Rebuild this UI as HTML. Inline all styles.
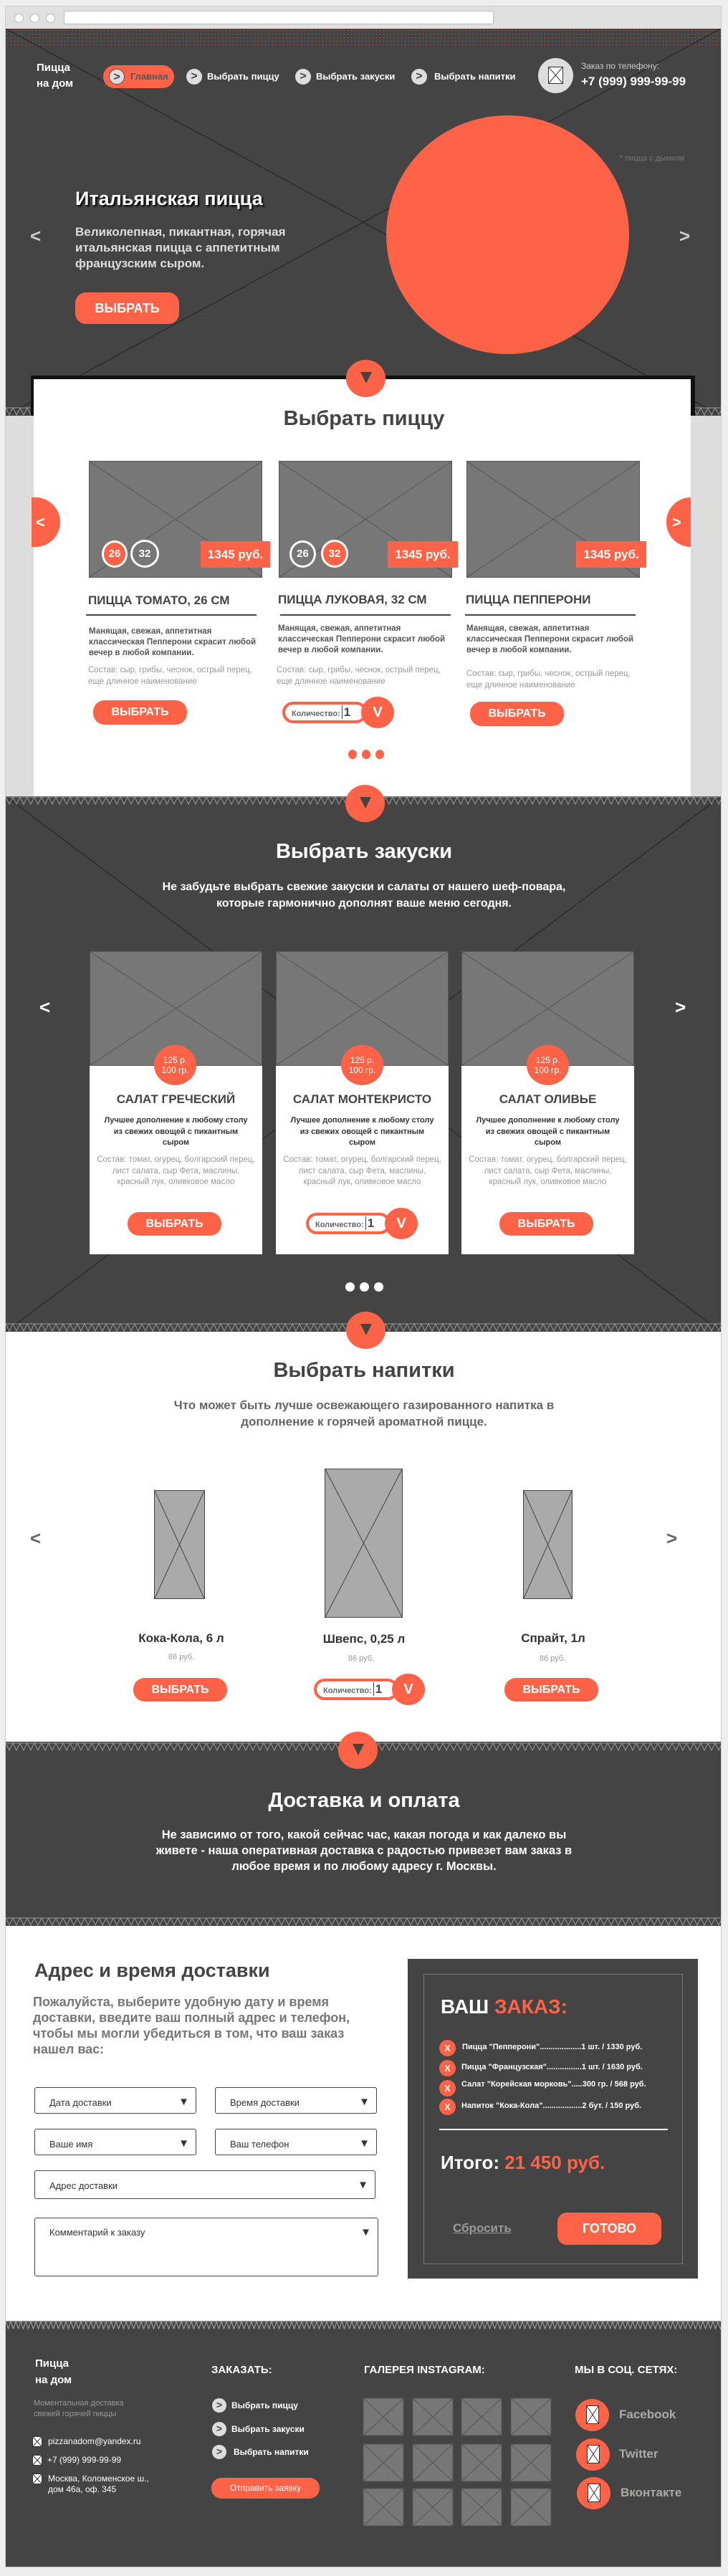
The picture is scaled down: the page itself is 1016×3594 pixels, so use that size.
<!DOCTYPE html>
<html><head><meta charset="utf-8">
<style>
*{margin:0;padding:0;box-sizing:border-box}
body{width:1016px;height:3594px;background:#eee;position:relative;font-family:"Liberation Sans",Arial,sans-serif;overflow:hidden}
.a{position:absolute}
.w{white-space:nowrap}
.or{background:#ff6347}
.ph{position:absolute;background:#777;border:1px solid #555}
.ph svg,.x svg{position:absolute;left:0;top:0;width:100%;height:100%}
.btn{position:absolute;background:#ff6347;color:#fff;font-weight:bold;border-radius:16px;text-align:center}
.zz{position:absolute;left:8px;width:998px;height:12px}
.arr{position:absolute;width:55px;height:52px;border-radius:50%;background:#ff6347}
.arr:after{content:"";position:absolute;left:20px;top:17px;border-left:8px solid transparent;border-right:8px solid transparent;border-top:16px solid #444}
.nic{position:absolute;width:22px;height:22px;border-radius:50%;background:#ddd;color:#444;font-weight:bold;font-size:16px;line-height:21px;text-align:center}
.qty{position:absolute;height:30px;width:118px;border:4px solid #ff6347;border-radius:15px;background:#fff;font-size:11px;font-weight:bold;color:#666;padding-left:9px;line-height:22px}
.qty b{font-size:17px;color:#444;border-left:1px solid #444;padding-left:2px;margin-left:2px}
.qv{position:absolute;width:46px;height:44px;border-radius:50%;background:#ff6347;color:#fff;font-weight:bold;font-size:20px;text-align:center;line-height:44px}
.inp{position:absolute;border:1px solid #444;border-radius:3px;background:#fff;font-size:13px;color:#333;padding:13px 0 0 20px}
.inp:after{content:"▼";position:absolute;right:9px;top:11px;font-size:15px;color:#333}
</style></head><body>
<svg width="0" height="0" style="position:absolute"><defs>
<pattern id="zg" width="20" height="12" patternUnits="userSpaceOnUse"><path d="M0 1 L20 1 M0 1 L5 11 L10 1 L15 11 L20 1" stroke="#999" stroke-width="1" fill="none"/></pattern>
<pattern id="zg2" width="14" height="12" patternUnits="userSpaceOnUse"><path d="M0 1 L14 1 M0 1 L3.5 11 L7 1 L10.5 11 L14 1" stroke="#aaa" stroke-width="1" fill="none"/></pattern>
<pattern id="dots" width="5" height="5" patternUnits="userSpaceOnUse"><rect x="2" y="2" width="1" height="1" fill="#d55"/></pattern>
</defs></svg>

<!-- browser chrome -->
<div class="a" style="left:7px;top:8px;width:1000px;height:3574px;background:#fff;border:1px solid #ccc"></div>
<div class="a" style="left:8px;top:9px;width:998px;height:31px;background:#e0e0e0"></div>
<div class="a" style="left:20px;top:19px;width:13px;height:13px;border-radius:50%;background:#fff;border:1px solid #bbb"></div>
<div class="a" style="left:42px;top:19px;width:13px;height:13px;border-radius:50%;background:#fff;border:1px solid #bbb"></div>
<div class="a" style="left:64px;top:19px;width:13px;height:13px;border-radius:50%;background:#fff;border:1px solid #bbb"></div>
<div class="a" style="left:89px;top:15px;width:600px;height:19px;background:#fff;border:1px solid #bbb;border-radius:3px"></div>

<!-- HERO -->
<div class="a" style="left:8px;top:40px;width:998px;height:540px;background:#444"></div>
<svg class="a" style="left:8px;top:40px" width="998" height="25"><rect width="998" height="25" fill="url(#dots)"/><line x1="0" y1="0" x2="998" y2="0" stroke="#d55" stroke-dasharray="1 2"/></svg>
<svg class="a" style="left:8px;top:40px" width="998" height="540"><line x1="0" y1="0" x2="998" y2="540" stroke="#222"/><line x1="998" y1="0" x2="0" y2="540" stroke="#222"/></svg>
<div class="a w" style="left:51px;top:84px;color:#fff;font-weight:bold;font-size:15px;line-height:22px">Пицца<br>на дом</div>
<div class="a" style="left:144px;top:91px;width:99px;height:32px;border-radius:16px;background:#ff6347"></div>
<div class="nic" style="left:152px;top:96px;border:1px solid #555">&gt;</div>
<div class="a w" style="left:182px;top:99px;font-size:13px;font-weight:bold;color:#555">Главная</div>
<div class="nic" style="left:260px;top:96px">&gt;</div>
<div class="a w" style="left:289px;top:99px;font-size:13px;font-weight:bold;color:#fff">Выбрать пиццу</div>
<div class="nic" style="left:412px;top:96px">&gt;</div>
<div class="a w" style="left:441px;top:99px;font-size:13px;font-weight:bold;color:#fff">Выбрать закуски</div>
<div class="nic" style="left:574px;top:96px">&gt;</div>
<div class="a w" style="left:606px;top:99px;font-size:13px;font-weight:bold;color:#fff">Выбрать напитки</div>
<div class="a" style="left:751px;top:81px;width:49px;height:49px;border-radius:50%;background:#ddd"></div>
<div class="a x" style="left:765px;top:93px;width:21px;height:24px;background:#fff;border:1px solid #333"><svg><line x1="0" y1="0" x2="100%" y2="100%" stroke="#333"/><line x1="100%" y1="0" x2="0" y2="100%" stroke="#333"/></svg></div>
<div class="a w" style="left:811px;top:85px;font-size:12px;color:#ccc">Заказ по телефону:</div>
<div class="a w" style="left:811px;top:104px;font-size:17px;font-weight:bold;color:#fff">+7 (999) 999-99-99</div>
<div class="a" style="left:539px;top:161px;width:339px;height:333px;border-radius:50%;background:#ff6347"></div>
<div class="a w" style="left:865px;top:215px;font-size:11px;color:#777">* пицца с дымком</div>
<div class="a w" style="left:105px;top:262px;font-size:27px;font-weight:bold;color:#fff;text-shadow:2px 2px 2px #000">Итальянская пицца</div>
<div class="a" style="left:105px;top:313px;width:340px;font-size:17px;font-weight:bold;color:#ddd;line-height:22px">Великолепная, пикантная, горячая итальянская пицца с аппетитным французским сыром.</div>
<div class="btn" style="left:105px;top:408px;width:145px;height:44px;border-radius:15px;font-size:18px;line-height:44px">ВЫБРАТЬ</div>
<div class="a" style="left:42px;top:314px;font-size:26px;font-weight:bold;color:#ccc">&lt;</div>
<div class="a" style="left:948px;top:314px;font-size:26px;font-weight:bold;color:#ccc">&gt;</div>
<svg class="zz" style="top:568px"><rect width="998" height="12" fill="url(#zg)"/></svg>

<!-- PIZZA -->
<div class="a" style="left:8px;top:580px;width:998px;height:531px;background:#ddd"></div>
<div class="a" style="left:43px;top:524px;width:927px;height:56px;background:#111"></div>
<div class="a" style="left:47px;top:529px;width:917px;height:582px;background:#fff"></div>
<div class="arr" style="left:483px;top:502px"></div>
<div class="a w" style="left:0;width:1016px;text-align:center;top:568px;font-size:29px;font-weight:bold;color:#444">Выбрать пиццу</div>
<div class="a" style="left:44px;top:694px;width:40px;height:69px;border-radius:0 35px 35px 0;background:#ff6347;color:#fff;font-weight:bold;font-size:22px;line-height:69px;padding-left:6px">&lt;</div>
<div class="a" style="left:930px;top:694px;width:34px;height:69px;border-radius:35px 0 0 35px;background:#ff6347;color:#fff;font-weight:bold;font-size:22px;line-height:69px;padding-left:8px">&gt;</div>

<div class="ph" style="left:124px;top:643px;width:242px;height:163px"><svg><line x1="0" y1="0" x2="100%" y2="100%" stroke="#555"/><line x1="100%" y1="0" x2="0" y2="100%" stroke="#555"/></svg></div>
<div class="ph" style="left:389px;top:643px;width:242px;height:163px"><svg><line x1="0" y1="0" x2="100%" y2="100%" stroke="#555"/><line x1="100%" y1="0" x2="0" y2="100%" stroke="#555"/></svg></div>
<div class="ph" style="left:651px;top:643px;width:242px;height:163px"><svg><line x1="0" y1="0" x2="100%" y2="100%" stroke="#555"/><line x1="100%" y1="0" x2="0" y2="100%" stroke="#555"/></svg></div>
<div class="a or" style="left:142px;top:754px;width:36px;height:38px;border-radius:50%;border:3px solid #fff;color:#fff;font-size:15px;font-weight:bold;text-align:center;line-height:32px">26</div>
<div class="a" style="left:182px;top:753px;width:40px;height:39px;border-radius:50%;border:3px solid #fff;background:#777;color:#fff;font-size:15px;font-weight:bold;text-align:center;line-height:33px">32</div>
<div class="a" style="left:404px;top:754px;width:37px;height:38px;border-radius:50%;border:3px solid #fff;background:#777;color:#fff;font-size:15px;font-weight:bold;text-align:center;line-height:32px">26</div>
<div class="a or" style="left:448px;top:753px;width:38px;height:39px;border-radius:50%;border:3px solid #fff;color:#fff;font-size:15px;font-weight:bold;text-align:center;line-height:33px">32</div>
<div class="a or w" style="left:280px;top:755px;width:97px;height:37px;color:#fff;font-size:17px;font-weight:bold;text-align:center;line-height:37px">1345 руб.</div>
<div class="a or w" style="left:541px;top:755px;width:98px;height:37px;color:#fff;font-size:17px;font-weight:bold;text-align:center;line-height:37px">1345 руб.</div>
<div class="a or w" style="left:804px;top:755px;width:98px;height:37px;color:#fff;font-size:17px;font-weight:bold;text-align:center;line-height:37px">1345 руб.</div>

<div class="a w" style="left:123px;top:828px;font-size:17px;font-weight:bold;color:#444">ПИЦЦА ТОМАТО, 26 СМ</div>
<div class="a w" style="left:388px;top:827px;font-size:17px;font-weight:bold;color:#444">ПИЦЦА ЛУКОВАЯ, 32 СМ</div>
<div class="a w" style="left:650px;top:827px;font-size:17px;font-weight:bold;color:#444">ПИЦЦА ПЕППЕРОНИ</div>
<div class="a" style="left:120px;top:857px;width:238px;height:2px;background:#444"></div>
<div class="a" style="left:391px;top:857px;width:238px;height:2px;background:#444"></div>
<div class="a" style="left:649px;top:857px;width:238px;height:2px;background:#444"></div>
<div class="a" style="left:124px;top:874px;width:240px;font-size:11.5px;font-weight:bold;color:#555;line-height:15px">Манящая, свежая, аппетитная классическая Пепперони скрасит любой вечер в любой компании.</div>
<div class="a" style="left:388px;top:870px;width:240px;font-size:11.5px;font-weight:bold;color:#555;line-height:15px">Манящая, свежая, аппетитная классическая Пепперони скрасит любой вечер в любой компании.</div>
<div class="a" style="left:651px;top:870px;width:240px;font-size:11.5px;font-weight:bold;color:#555;line-height:15px">Манящая, свежая, аппетитная классическая Пепперони скрасит любой вечер в любой компании.</div>
<div class="a" style="left:123px;top:927px;width:240px;font-size:11.5px;color:#999;line-height:16px">Состав: сыр, грибы, чеснок, острый перец, еще длинное наименование</div>
<div class="a" style="left:386px;top:927px;width:240px;font-size:11.5px;color:#999;line-height:16px">Состав: сыр, грибы, чеснок, острый перец, еще длинное наименование</div>
<div class="a" style="left:651px;top:932px;width:240px;font-size:11.5px;color:#999;line-height:16px">Состав: сыр, грибы, чеснок, острый перец, еще длинное наименование</div>
<div class="btn" style="left:130px;top:977px;width:131px;height:34px;font-size:16px;line-height:34px">ВЫБРАТЬ</div>
<div class="qty" style="left:394px;top:979px">Количество:<b>1</b></div>
<div class="qv" style="left:504px;top:972px">V</div>
<div class="btn" style="left:656px;top:979px;width:131px;height:34px;font-size:16px;line-height:34px">ВЫБРАТЬ</div>
<div class="a or" style="left:486px;top:1046px;width:12px;height:13px;border-radius:50%"></div>
<div class="a or" style="left:505px;top:1046px;width:12px;height:13px;border-radius:50%"></div>
<div class="a or" style="left:524px;top:1046px;width:12px;height:13px;border-radius:50%"></div>

<!-- SNACKS -->
<div class="a" style="left:8px;top:1111px;width:998px;height:747px;background:#444"></div>
<svg class="a" style="left:8px;top:1111px" width="998" height="747"><line x1="0" y1="0" x2="998" y2="747" stroke="#222"/><line x1="998" y1="0" x2="0" y2="747" stroke="#222"/></svg>
<svg class="zz" style="top:1111px"><rect width="998" height="12" fill="url(#zg)"/></svg>
<div class="arr" style="left:482px;top:1095px"></div>
<div class="a w" style="left:0;width:1016px;text-align:center;top:1172px;font-size:29px;font-weight:bold;color:#fff">Выбрать закуски</div>
<div class="a" style="left:0;width:1016px;text-align:center;top:1226px;font-size:16px;font-weight:bold;color:#fff;line-height:23px">Не забудьте выбрать свежие закуски и салаты от нашего шеф-повара,<br>которые гармонично дополнят ваше меню сегодня.</div>
<div class="a" style="left:55px;top:1390px;font-size:26px;font-weight:bold;color:#fff">&lt;</div>
<div class="a" style="left:942px;top:1390px;font-size:26px;font-weight:bold;color:#fff">&gt;</div>

<div class="a" style="left:125px;top:1327px;width:241px;height:423px;background:#fff"></div>
<div class="a" style="left:385px;top:1327px;width:241px;height:423px;background:#fff"></div>
<div class="a" style="left:644px;top:1327px;width:241px;height:423px;background:#fff"></div>
<div class="ph" style="left:125px;top:1327px;width:241px;height:160px"><svg><line x1="0" y1="0" x2="100%" y2="100%" stroke="#555"/><line x1="100%" y1="0" x2="0" y2="100%" stroke="#555"/></svg></div>
<div class="ph" style="left:385px;top:1327px;width:241px;height:160px"><svg><line x1="0" y1="0" x2="100%" y2="100%" stroke="#555"/><line x1="100%" y1="0" x2="0" y2="100%" stroke="#555"/></svg></div>
<div class="ph" style="left:644px;top:1327px;width:241px;height:160px"><svg><line x1="0" y1="0" x2="100%" y2="100%" stroke="#555"/><line x1="100%" y1="0" x2="0" y2="100%" stroke="#555"/></svg></div>
<div class="a or" style="left:215px;top:1458px;width:59px;height:56px;border-radius:50%;color:#fff;font-size:12px;text-align:center;line-height:14px;padding-top:14px">125 р.<br>100 гр.</div>
<div class="a or" style="left:476px;top:1458px;width:59px;height:56px;border-radius:50%;color:#fff;font-size:12px;text-align:center;line-height:14px;padding-top:14px">125 р.<br>100 гр.</div>
<div class="a or" style="left:735px;top:1458px;width:59px;height:56px;border-radius:50%;color:#fff;font-size:12px;text-align:center;line-height:14px;padding-top:14px">125 р.<br>100 гр.</div>
<div class="a w" style="left:125px;width:241px;text-align:center;top:1524px;font-size:17px;font-weight:bold;color:#444">САЛАТ ГРЕЧЕСКИЙ</div>
<div class="a w" style="left:385px;width:241px;text-align:center;top:1524px;font-size:17px;font-weight:bold;color:#444">САЛАТ МОНТЕКРИСТО</div>
<div class="a w" style="left:644px;width:241px;text-align:center;top:1524px;font-size:17px;font-weight:bold;color:#444">САЛАТ ОЛИВЬЕ</div>
<div class="a" style="left:140px;width:211px;text-align:center;top:1556px;font-size:11px;font-weight:bold;color:#333;line-height:15.5px">Лучшее дополнение к любому столу из свежих овощей с пикантным сыром</div>
<div class="a" style="left:400px;width:211px;text-align:center;top:1556px;font-size:11px;font-weight:bold;color:#333;line-height:15.5px">Лучшее дополнение к любому столу из свежих овощей с пикантным сыром</div>
<div class="a" style="left:659px;width:211px;text-align:center;top:1556px;font-size:11px;font-weight:bold;color:#333;line-height:15.5px">Лучшее дополнение к любому столу из свежих овощей с пикантным сыром</div>
<div class="a" style="left:135px;width:221px;text-align:center;top:1611px;font-size:11.5px;color:#999;line-height:15.5px">Состав: томат, огурец, болгарский перец, лист салата, сыр Фета, маслины, красный лук, оливковое масло</div>
<div class="a" style="left:395px;width:221px;text-align:center;top:1611px;font-size:11.5px;color:#999;line-height:15.5px">Состав: томат, огурец, болгарский перец, лист салата, сыр Фета, маслины, красный лук, оливковое масло</div>
<div class="a" style="left:654px;width:221px;text-align:center;top:1611px;font-size:11.5px;color:#999;line-height:15.5px">Состав: томат, огурец, болгарский перец, лист салата, сыр Фета, маслины, красный лук, оливковое масло</div>
<div class="btn" style="left:178px;top:1691px;width:131px;height:33px;font-size:16px;line-height:33px">ВЫБРАТЬ</div>
<div class="qty" style="left:427px;top:1692px">Количество:<b>1</b></div>
<div class="qv" style="left:537px;top:1685px">V</div>
<div class="btn" style="left:697px;top:1691px;width:131px;height:33px;font-size:16px;line-height:33px">ВЫБРАТЬ</div>
<div class="a" style="left:482px;top:1789px;width:13px;height:13px;border-radius:50%;background:#fff"></div>
<div class="a" style="left:502px;top:1789px;width:13px;height:13px;border-radius:50%;background:#fff"></div>
<div class="a" style="left:522px;top:1789px;width:13px;height:13px;border-radius:50%;background:#fff"></div>
<svg class="zz" style="top:1846px"><rect width="998" height="12" fill="url(#zg)"/></svg>

<!-- DRINKS -->
<div class="a" style="left:8px;top:1858px;width:998px;height:572px;background:#fff"></div>
<div class="arr" style="left:483px;top:1830px"></div>
<div class="a w" style="left:0;width:1016px;text-align:center;top:1896px;font-size:29px;font-weight:bold;color:#444">Выбрать напитки</div>
<div class="a" style="left:0;width:1016px;text-align:center;top:1949px;font-size:17px;font-weight:bold;color:#666;line-height:23px">Что может быть лучше освежающего газированного напитка в<br>дополнение к горячей ароматной пицце.</div>
<div class="a" style="left:42px;top:2131px;font-size:26px;font-weight:bold;color:#666">&lt;</div>
<div class="a" style="left:930px;top:2131px;font-size:26px;font-weight:bold;color:#666">&gt;</div>
<div class="ph" style="left:215px;top:2079px;width:71px;height:152px;background:#aaa;border-color:#444"><svg><line x1="0" y1="0" x2="100%" y2="100%" stroke="#444"/><line x1="100%" y1="0" x2="0" y2="100%" stroke="#444"/></svg></div>
<div class="ph" style="left:453px;top:2049px;width:109px;height:208px;background:#aaa;border-color:#444"><svg><line x1="0" y1="0" x2="100%" y2="100%" stroke="#444"/><line x1="100%" y1="0" x2="0" y2="100%" stroke="#444"/></svg></div>
<div class="ph" style="left:730px;top:2079px;width:69px;height:152px;background:#aaa;border-color:#444"><svg><line x1="0" y1="0" x2="100%" y2="100%" stroke="#444"/><line x1="100%" y1="0" x2="0" y2="100%" stroke="#444"/></svg></div>
<div class="a w" style="left:153px;width:200px;text-align:center;top:2276px;font-size:17px;font-weight:bold;color:#333">Кока-Кола, 6 л</div>
<div class="a w" style="left:408px;width:200px;text-align:center;top:2277px;font-size:17px;font-weight:bold;color:#333">Швепс, 0,25 л</div>
<div class="a w" style="left:672px;width:200px;text-align:center;top:2276px;font-size:17px;font-weight:bold;color:#333">Спрайт, 1л</div>
<div class="a w" style="left:153px;width:200px;text-align:center;top:2306px;font-size:11px;color:#999">86 руб.</div>
<div class="a w" style="left:404px;width:200px;text-align:center;top:2308px;font-size:11px;color:#999">86 руб.</div>
<div class="a w" style="left:671px;width:200px;text-align:center;top:2308px;font-size:11px;color:#999">86 руб.</div>
<div class="btn" style="left:186px;top:2341px;width:131px;height:33px;font-size:16px;line-height:33px">ВЫБРАТЬ</div>
<div class="qty" style="left:438px;top:2342px">Количество:<b>1</b></div>
<div class="qv" style="left:547px;top:2335px">V</div>
<div class="btn" style="left:704px;top:2341px;width:131px;height:33px;font-size:16px;line-height:33px">ВЫБРАТЬ</div>

<!-- DELIVERY -->
<div class="a" style="left:8px;top:2430px;width:998px;height:257px;background:#444"></div>
<svg class="zz" style="top:2431px"><rect width="998" height="12" fill="url(#zg)"/></svg>
<div class="arr" style="left:472px;top:2416px"></div>
<div class="a w" style="left:0;width:1016px;text-align:center;top:2496px;font-size:29px;font-weight:bold;color:#fff">Доставка и оплата</div>
<div class="a" style="left:0;width:1016px;text-align:center;top:2549px;font-size:16.5px;font-weight:bold;color:#fff;line-height:22px">Не зависимо от того, какой сейчас час, какая погода и как далеко вы<br>живете - наша оперативная доставка с радостью привезет вам заказ в<br>любое время и по любому адресу г. Москвы.</div>
<svg class="zz" style="top:2675px"><rect width="998" height="12" fill="url(#zg)"/></svg>

<!-- ADDRESS -->
<div class="a w" style="left:48px;top:2734px;font-size:27px;font-weight:bold;color:#444">Адрес и время доставки</div>
<div class="a" style="left:46px;top:2782px;width:460px;font-size:18px;font-weight:bold;color:#777;line-height:22px">Пожалуйста, выберите удобную дату и время доставки, введите ваш полный адрес и телефон, чтобы мы могли убедиться в том, что ваш заказ нашел вас:</div>
<div class="inp" style="left:48px;top:2912px;width:226px;height:37px">Дата доставки</div>
<div class="inp" style="left:300px;top:2912px;width:226px;height:37px">Время доставки</div>
<div class="inp" style="left:48px;top:2970px;width:226px;height:37px">Ваше имя</div>
<div class="inp" style="left:300px;top:2970px;width:226px;height:37px">Ваш телефон</div>
<div class="inp" style="left:48px;top:3028px;width:476px;height:40px">Адрес доставки</div>
<div class="inp" style="left:48px;top:3094px;width:480px;height:82px;padding-top:12px">Комментарий к заказу</div>

<div class="a" style="left:569px;top:2733px;width:405px;height:446px;background:#444"></div>
<div class="a" style="left:591px;top:2754px;width:362px;height:405px;border:1px solid #777"></div>
<div class="a w" style="left:615px;top:2784px;font-size:28px;font-weight:bold;color:#fff">ВАШ <span style="color:#ff6347">ЗАКАЗ:</span></div>
<div class="a or" style="left:613px;top:2846px;width:23px;height:23px;border-radius:50%;color:#fff;font-weight:bold;font-size:13px;text-align:center;line-height:23px">X</div>
<div class="a or" style="left:613px;top:2874px;width:23px;height:23px;border-radius:50%;color:#fff;font-weight:bold;font-size:13px;text-align:center;line-height:23px">X</div>
<div class="a or" style="left:613px;top:2902px;width:23px;height:23px;border-radius:50%;color:#fff;font-weight:bold;font-size:13px;text-align:center;line-height:23px">X</div>
<div class="a or" style="left:613px;top:2928px;width:23px;height:23px;border-radius:50%;color:#fff;font-weight:bold;font-size:13px;text-align:center;line-height:23px">X</div>
<div class="a w" style="left:645px;top:2850px;font-size:11px;font-weight:bold;color:#fff">Пицца "Пепперони"...................1 шт. / 1330 руб.</div>
<div class="a w" style="left:644px;top:2878px;font-size:11px;font-weight:bold;color:#fff">Пицца "Французская"................1 шт. / 1630 руб.</div>
<div class="a w" style="left:644px;top:2902px;font-size:11px;font-weight:bold;color:#fff">Салат "Корейская морковь".....300 гр. / 568 руб.</div>
<div class="a w" style="left:644px;top:2932px;font-size:11px;font-weight:bold;color:#fff">Напиток "Кока-Кола"..................2 бут. / 150 руб.</div>
<div class="a" style="left:613px;top:2970px;width:319px;height:2px;background:#fff"></div>
<div class="a w" style="left:615px;top:3002px;font-size:26px;font-weight:bold;color:#fff">Итого: <span style="color:#ff6347">21 450 руб.</span></div>
<div class="a w" style="left:632px;top:3099px;font-size:17px;font-weight:bold;color:#999;text-decoration:underline">Сбросить</div>
<div class="btn" style="left:778px;top:3087px;width:145px;height:45px;border-radius:13px;font-size:18px;line-height:45px">ГОТОВО</div>

<!-- FOOTER -->
<div class="a" style="left:8px;top:3238px;width:998px;height:343px;background:#444"></div>
<svg class="zz" style="top:3238px"><rect width="998" height="12" fill="url(#zg2)"/></svg>
<div class="a w" style="left:49px;top:3286px;font-size:15px;font-weight:bold;color:#fff;line-height:23px">Пицца<br>на дом</div>
<div class="a w" style="left:47px;top:3346px;font-size:11px;color:#999;line-height:15px">Моментальная доставка<br>свежей горячей пиццы</div>
<div class="a x" style="left:45px;top:3399px;width:14px;height:15px;background:#fff;border:1px solid #333"><svg><line x1="0" y1="0" x2="100%" y2="100%" stroke="#333"/><line x1="100%" y1="0" x2="0" y2="100%" stroke="#333"/></svg></div>
<div class="a x" style="left:45px;top:3425px;width:14px;height:15px;background:#fff;border:1px solid #333"><svg><line x1="0" y1="0" x2="100%" y2="100%" stroke="#333"/><line x1="100%" y1="0" x2="0" y2="100%" stroke="#333"/></svg></div>
<div class="a x" style="left:45px;top:3451px;width:14px;height:15px;background:#fff;border:1px solid #333"><svg><line x1="0" y1="0" x2="100%" y2="100%" stroke="#333"/><line x1="100%" y1="0" x2="0" y2="100%" stroke="#333"/></svg></div>
<div class="a w" style="left:67px;top:3399px;font-size:12px;color:#fff">pizzanadom@yandex.ru</div>
<div class="a w" style="left:66px;top:3425px;font-size:12px;color:#fff">+7 (999) 999-99-99</div>
<div class="a w" style="left:67px;top:3451px;font-size:12px;color:#fff;line-height:15px">Москва, Коломенское ш.,<br>дом 46а, оф. 345</div>

<div class="a w" style="left:295px;top:3298px;font-size:15px;font-weight:bold;color:#fff">ЗАКАЗАТЬ:</div>
<div class="nic" style="left:296px;top:3346px;width:20px;height:20px;font-size:14px;line-height:19px">&gt;</div>
<div class="a w" style="left:323px;top:3349px;font-size:12px;font-weight:bold;color:#fff">Выбрать пиццу</div>
<div class="nic" style="left:296px;top:3379px;width:20px;height:20px;font-size:14px;line-height:19px">&gt;</div>
<div class="a w" style="left:323px;top:3382px;font-size:12px;font-weight:bold;color:#fff">Выбрать закуски</div>
<div class="nic" style="left:296px;top:3411px;width:20px;height:20px;font-size:14px;line-height:19px">&gt;</div>
<div class="a w" style="left:326px;top:3414px;font-size:12px;font-weight:bold;color:#fff">Выбрать напитки</div>
<div class="btn" style="left:295px;top:3457px;width:151px;height:29px;border-radius:14px;font-size:12px;font-weight:normal;line-height:29px">Отправить заявку</div>

<div class="a w" style="left:508px;top:3298px;font-size:15px;font-weight:bold;color:#fff">ГАЛЕРЕЯ INSTAGRAM:</div>
<svg class="a" style="left:506px;top:3345px" width="266" height="182">
<g stroke="#555" fill="#777">
<rect x="1" y="1" width="56" height="52"/><rect x="70" y="1" width="56" height="52"/><rect x="138" y="1" width="56" height="52"/><rect x="207" y="1" width="56" height="52"/>
<rect x="1" y="65" width="56" height="52"/><rect x="70" y="65" width="56" height="52"/><rect x="138" y="65" width="56" height="52"/><rect x="207" y="65" width="56" height="52"/>
<rect x="1" y="127" width="56" height="52"/><rect x="70" y="127" width="56" height="52"/><rect x="138" y="127" width="56" height="52"/><rect x="207" y="127" width="56" height="52"/>
</g>
<g stroke="#555">
<path d="M1 1L57 53M57 1L1 53M70 1L126 53M126 1L70 53M138 1L194 53M194 1L138 53M207 1L263 53M263 1L207 53"/>
<path d="M1 65L57 117M57 65L1 117M70 65L126 117M126 65L70 117M138 65L194 117M194 65L138 117M207 65L263 117M263 65L207 117"/>
<path d="M1 127L57 179M57 127L1 179M70 127L126 179M126 127L70 179M138 127L194 179M194 127L138 179M207 127L263 179M263 127L207 179"/>
</g></svg>

<div class="a w" style="left:802px;top:3298px;font-size:15px;font-weight:bold;color:#fff">МЫ В СОЦ. СЕТЯХ:</div>
<div class="a or" style="left:803px;top:3347px;width:47px;height:45px;border-radius:50%"></div>
<div class="a or" style="left:804px;top:3402px;width:47px;height:45px;border-radius:50%"></div>
<div class="a or" style="left:805px;top:3456px;width:47px;height:45px;border-radius:50%"></div>
<div class="a x" style="left:818px;top:3356px;width:18px;height:26px;background:#fff;border:1px solid #333"><svg><line x1="0" y1="0" x2="100%" y2="100%" stroke="#333"/><line x1="100%" y1="0" x2="0" y2="100%" stroke="#333"/></svg></div>
<div class="a x" style="left:819px;top:3411px;width:18px;height:26px;background:#fff;border:1px solid #333"><svg><line x1="0" y1="0" x2="100%" y2="100%" stroke="#333"/><line x1="100%" y1="0" x2="0" y2="100%" stroke="#333"/></svg></div>
<div class="a x" style="left:820px;top:3465px;width:18px;height:26px;background:#fff;border:1px solid #333"><svg><line x1="0" y1="0" x2="100%" y2="100%" stroke="#333"/><line x1="100%" y1="0" x2="0" y2="100%" stroke="#333"/></svg></div>
<div class="a w" style="left:864px;top:3359px;font-size:17px;font-weight:bold;color:#aaa">Facebook</div>
<div class="a w" style="left:864px;top:3414px;font-size:17px;font-weight:bold;color:#aaa">Twitter</div>
<div class="a w" style="left:866px;top:3468px;font-size:17px;font-weight:bold;color:#aaa">Вконтакте</div>
</body></html>
